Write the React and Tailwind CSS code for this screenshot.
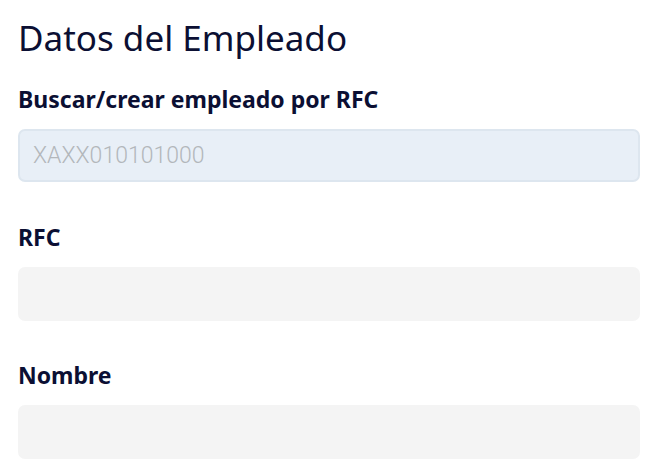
export default function App() {
  return (
    <div className="min-h-screen bg-white pl-[18px] pr-[20px] pt-[14px] text-[#0b0f33]" style={{ fontFamily: '"Noto Sans", "Open Sans", sans-serif' }}>
      <h1 className="text-[35px] leading-[48px] font-normal">Datos del Empleado</h1>
      <form className="mt-[22px] flex flex-col">
        <label htmlFor="buscar" className="text-[23px] leading-[30px] font-bold">
          Buscar/crear empleado por RFC
        </label>
        <input
          id="buscar"
          type="text"
          placeholder="XAXX010101000"
          className="mt-[15px] h-[53px] w-full rounded-[7px] border-2 border-[#dde6ef] bg-[#e8eff7] px-[13px] text-[23px] text-[#333] placeholder:text-[#b3b7bb] focus:outline-none"
          style={{ fontFamily: 'Roboto, "Open Sans", sans-serif', fontWeight: 300 }}
        />
        <label htmlFor="rfc" className="mt-[40px] text-[23px] leading-[30px] font-bold">
          RFC
        </label>
        <input
          id="rfc"
          type="text"
          className="mt-[15px] h-[54px] w-full rounded-[7px] bg-[#f4f4f4] px-[14px] text-[22px] focus:outline-none"
        />
        <label htmlFor="nombre" className="mt-[39px] text-[23px] leading-[30px] font-bold">
          Nombre
        </label>
        <input
          id="nombre"
          type="text"
          className="mt-[15px] h-[54px] w-full rounded-[7px] bg-[#f4f4f4] px-[14px] text-[22px] focus:outline-none"
        />
      </form>
    </div>
  )
}
